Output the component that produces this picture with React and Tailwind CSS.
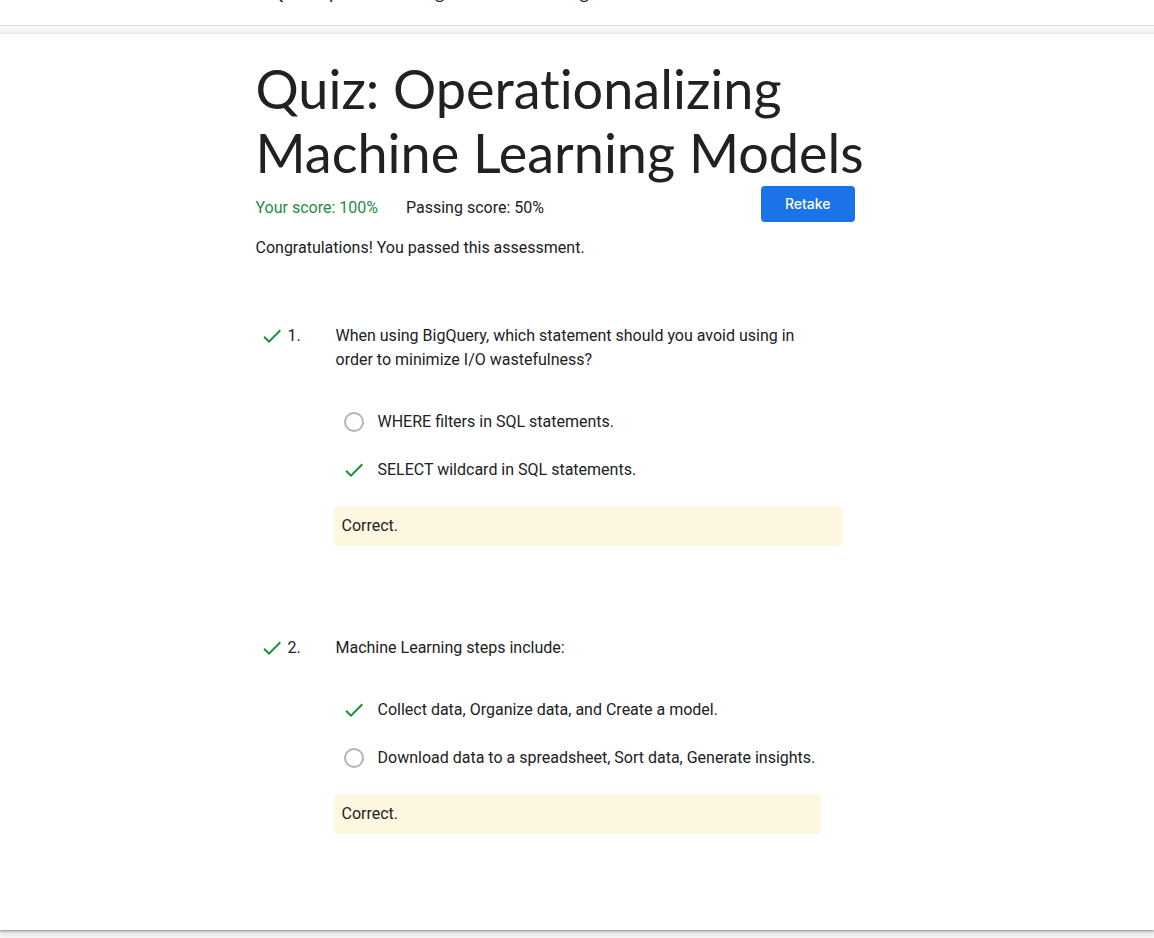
import React from "react";

const questions = [
  {
    text: "When using BigQuery, which statement should you avoid using in order to minimize I/O wastefulness?",
    options: [
      { text: "WHERE filters in SQL statements.", selected: false },
      { text: "SELECT wildcard in SQL statements.", selected: true },
    ],
    feedback: "Correct.",
  },
  {
    text: "Machine Learning steps include:",
    options: [
      { text: "Collect data, Organize data, and Create a model.", selected: true },
      {
        text: "Download data to a spreadsheet, Sort data, Generate insights.",
        selected: false,
      },
    ],
    feedback: "Correct.",
  },
];

function Check() {
  return (
    <svg viewBox="0 0 24 24" className="size-6 shrink-0 fill-[#1e8e3e]" aria-hidden="true">
      <path d="M9 16.17L4.83 12l-1.42 1.41L9 19 21 7l-1.41-1.41z" />
    </svg>
  );
}

function Option({ name, option }) {
  return (
    <label className="flex h-12 items-center gap-3">
      <span className="flex size-6 shrink-0 items-center justify-center">
        <input
          type="radio"
          name={name}
          defaultChecked={option.selected}
          className={
            option.selected
              ? "sr-only"
              : "size-5 appearance-none rounded-full border-2 border-[#b4b4b4]"
          }
        />
        {option.selected && <Check />}
      </span>
      <span>{option.text}</span>
    </label>
  );
}

function Question({ number, question }) {
  return (
    <li className="flex items-start">
      <div className="flex w-20 shrink-0 items-center gap-1 pl-1">
        <Check />
        <span>{number}.</span>
      </div>
      <fieldset className="min-w-0 max-w-[506px]">
        <legend className="pr-6">{question.text}</legend>
        <div className="pt-[26px] pr-[6px] pl-[6px]">
          {question.options.map((option) => (
            <Option key={option.text} name={`question-${number}`} option={option} />
          ))}
        </div>
        <p className="mt-3 -ml-[2px] rounded bg-[#fef7e0] p-2">{question.feedback}</p>
      </fieldset>
    </li>
  );
}

export default function App() {
  return (
    <div className="flex min-h-screen flex-col bg-[#f8f9fa] font-[Roboto,sans-serif] text-base text-[#202124]">
      <header className="flex h-[26px] items-end overflow-hidden border-b border-[#dadce0] bg-white pb-[21px] pl-[269px]">
        <p className="font-[Lato,sans-serif] text-lg leading-6 [font-variant-ligatures:none]">
          Quiz: Operationalizing Machine Learning Models
        </p>
      </header>
      <main className="mt-2 mb-2 bg-white px-6 pt-[23px] pb-24 shadow-[0_1px_2px_rgba(60,64,67,0.5),0_2px_6px_2px_rgba(60,64,67,0.15)]">
        <div className="mx-auto max-w-[643px]">
          <h1 className="mb-px font-[Lato,sans-serif] text-[54px] leading-16 [font-variant-ligatures:none]">
            Quiz: Operationalizing
            <br />
            Machine Learning Models
          </h1>
          <div className="flex items-start justify-between pr-11">
            <div className="flex gap-7 pt-[10px]">
              <p className="text-[#1e8e3e]">Your score: 100%</p>
              <p>Passing score: 50%</p>
            </div>
            <button
              type="button"
              className="h-9 rounded bg-[#1a73e8] px-6 font-[Inter,sans-serif] text-sm font-medium text-white"
            >
              Retake
            </button>
          </div>
          <p className="mt-[14px]">Congratulations! You passed this assessment.</p>
          <ol className="mt-16 flex flex-col gap-[90px]">
            {questions.map((question, index) => (
              <Question key={question.text} number={index + 1} question={question} />
            ))}
          </ol>
        </div>
      </main>
    </div>
  );
}
